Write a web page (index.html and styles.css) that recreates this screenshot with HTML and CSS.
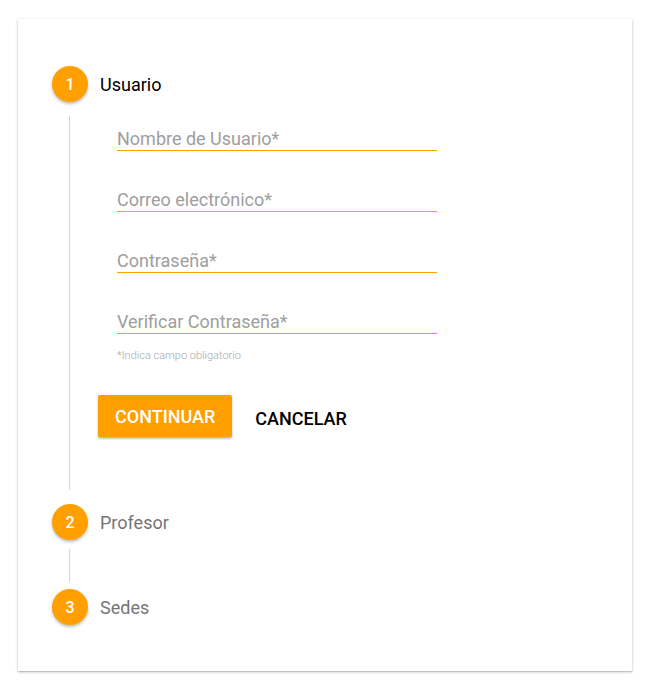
FILE: index.html
```html
<!DOCTYPE html>
<html lang="es">
<head>
<meta charset="utf-8">
<title>Registro</title>
<link rel="stylesheet" href="styles.css">
</head>
<body>
<div class="page">
  <div class="card">
    <div class="step">
      <div class="step-header">
        <span class="step-icon">1</span>
        <span class="step-label active">Usuario</span>
      </div>
      <div class="step-content">
        <form class="form">
          <div class="field"><span class="field-label">Nombre de Usuario*</span></div>
          <div class="field"><span class="field-label">Correo electrónico*</span></div>
          <div class="field"><span class="field-label">Contraseña*</span></div>
          <div class="field focused"><span class="field-label">Verificar Contraseña*</span></div>
          <div class="hint">*Indica campo obligatorio</div>
        </form>
        <div class="actions">
          <button type="button" class="btn btn-raised">CONTINUAR</button>
          <button type="button" class="btn btn-flat">CANCELAR</button>
        </div>
      </div>
    </div>
    <div class="step">
      <div class="step-header">
        <span class="step-icon">2</span>
        <span class="step-label">Profesor</span>
      </div>
      <div class="connector"></div>
    </div>
    <div class="step">
      <div class="step-header">
        <span class="step-icon">3</span>
        <span class="step-label">Sedes</span>
      </div>
    </div>
  </div>
</div>
</body>
</html>
```

FILE: styles.css
```css
* { box-sizing: border-box; }

html, body {
  margin: 0;
  padding: 0;
  background: #ffffff;
  font-family: Roboto, "Noto Sans", Arial, sans-serif;
}

.page {
  padding: 19px 18px;
}

.card {
  width: 614px;
  height: 652px;
  background: #fff;
  box-shadow: 0 1px 3px rgba(0,0,0,0.22), 0 1px 1px rgba(0,0,0,0.12);
  padding: 47px 0 0 34px;
}

.step-header {
  display: flex;
  align-items: center;
  height: 36px;
  gap: 12px;
}

.step-icon {
  width: 36px;
  height: 36px;
  border-radius: 50%;
  background: #ffa000;
  color: #fff;
  font-size: 16px;
  font-weight: 500;
  display: flex;
  align-items: center;
  justify-content: center;
  box-shadow: 0 2px 3px rgba(0,0,0,0.25);
  flex: none;
}

.step-label {
  font-size: 18px;
  line-height: 21px;
  color: #757575;
}

.step-label.active {
  color: #000;
}

.step-content {
  margin: 14px 0 14px 17px;
  border-left: 1px solid #d6d6d6;
  height: 374px;
}

.form {
  padding: 12px 0 0 47px;
  margin: 0;
}

.field {
  width: 320px;
  height: 23px;
  border-bottom: 1px solid #ffa000;
  margin-bottom: 38px;
}

.field.focused {
  margin-bottom: 0;
}

.field-label {
  display: block;
  font-size: 18px;
  line-height: 21px;
  color: #9e9e9e;
}

.hint {
  margin-top: 15px;
  font-size: 11px;
  line-height: 13px;
  color: #a8a8a8;
  font-weight: 300;
}

.actions {
  display: flex;
  align-items: center;
  gap: 6px;
  padding-left: 28px;
  margin-top: 31px;
}

.btn {
  height: 42px;
  padding: 0 17px;
  border: none;
  border-radius: 2px;
  font-family: Roboto, "Noto Sans", Arial, sans-serif;
  font-size: 18px;
  font-weight: 500;
  line-height: 21px;
  background: transparent;
  cursor: pointer;
}

.btn-raised {
  background: #ffa000;
  color: #fff;
  box-shadow: 0 2px 2px rgba(0,0,0,0.24), 0 0 2px rgba(0,0,0,0.12);
}

.btn-flat {
  color: #000;
  margin-top: 4px;
}

.connector {
  margin: 9px 0 7px 17px;
  height: 33px;
  border-left: 1px solid #d6d6d6;
}
```
